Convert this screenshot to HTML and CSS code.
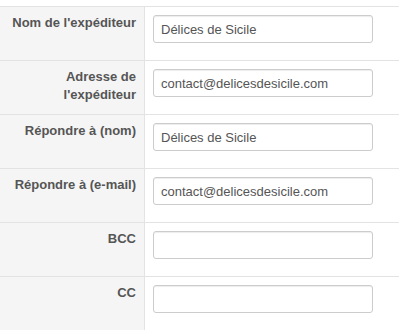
FILE: index.html
```html
<!DOCTYPE html>
<html lang="fr">

<head>
    <meta charset="UTF-8" />
    <meta name="viewport" content="width=device-width, initial-scale=1.0" />
    <title>Paramètres d'envoi</title>
    <link rel="stylesheet" href="styles.css">
</head>

<body>
    <div class="settings-form">
        <div class="form-row">
            <label class="form-label" for="from-name">Nom de l'expéditeur</label>
            <div class="form-field">
                <input type="text" id="from-name" value="Délices de Sicile">
            </div>
        </div>
        <div class="form-row">
            <label class="form-label" for="from-email">Adresse de l'expéditeur</label>
            <div class="form-field">
                <input type="text" id="from-email" value="contact@delicesdesicile.com">
            </div>
        </div>
        <div class="form-row">
            <label class="form-label" for="reply-name">Répondre à (nom)</label>
            <div class="form-field">
                <input type="text" id="reply-name" value="Délices de Sicile">
            </div>
        </div>
        <div class="form-row">
            <label class="form-label" for="reply-email">Répondre à (e-mail)</label>
            <div class="form-field">
                <input type="text" id="reply-email" value="contact@delicesdesicile.com">
            </div>
        </div>
        <div class="form-row">
            <label class="form-label" for="bcc">BCC</label>
            <div class="form-field">
                <input type="text" id="bcc" value="">
            </div>
        </div>
        <div class="form-row">
            <label class="form-label" for="cc">CC</label>
            <div class="form-field">
                <input type="text" id="cc" value="">
            </div>
        </div>
    </div>
</body>

</html>
```

FILE: styles.css
```css
:root {
    --label-bg: #f5f5f5;
    --line-color: #e3e3e3;
    --text-color: #555;
    --input-border: #ccc;
}

* {
    box-sizing: border-box;
    margin: 0;
    padding: 0;
}

body {
    font-family: "Liberation Sans", Arial, sans-serif;
    font-size: 13px;
    line-height: 18px;
    color: var(--text-color);
    background: white;
    padding-top: 6px;
}

.settings-form {
    width: 100%;
}

.form-row {
    display: flex;
    height: 54px;
    border-top: 1px solid var(--line-color);
}

.form-label {
    width: 145px;
    flex-shrink: 0;
    padding: 7px 8px 0 10px;
    text-align: right;
    font-weight: bold;
    background: var(--label-bg);
    border-right: 1px solid var(--line-color);
}

.form-field {
    flex: 1;
    padding: 8px 0 0 8px;
}

.form-field input {
    display: block;
    width: 220px;
    height: 28px;
    padding: 4px 7px;
    font-family: inherit;
    font-size: 13px;
    line-height: 18px;
    color: var(--text-color);
    background: white;
    border: 1px solid var(--input-border);
    border-radius: 3px;
    box-shadow: inset 0 1px 1px rgba(0, 0, 0, 0.075);
}
```
